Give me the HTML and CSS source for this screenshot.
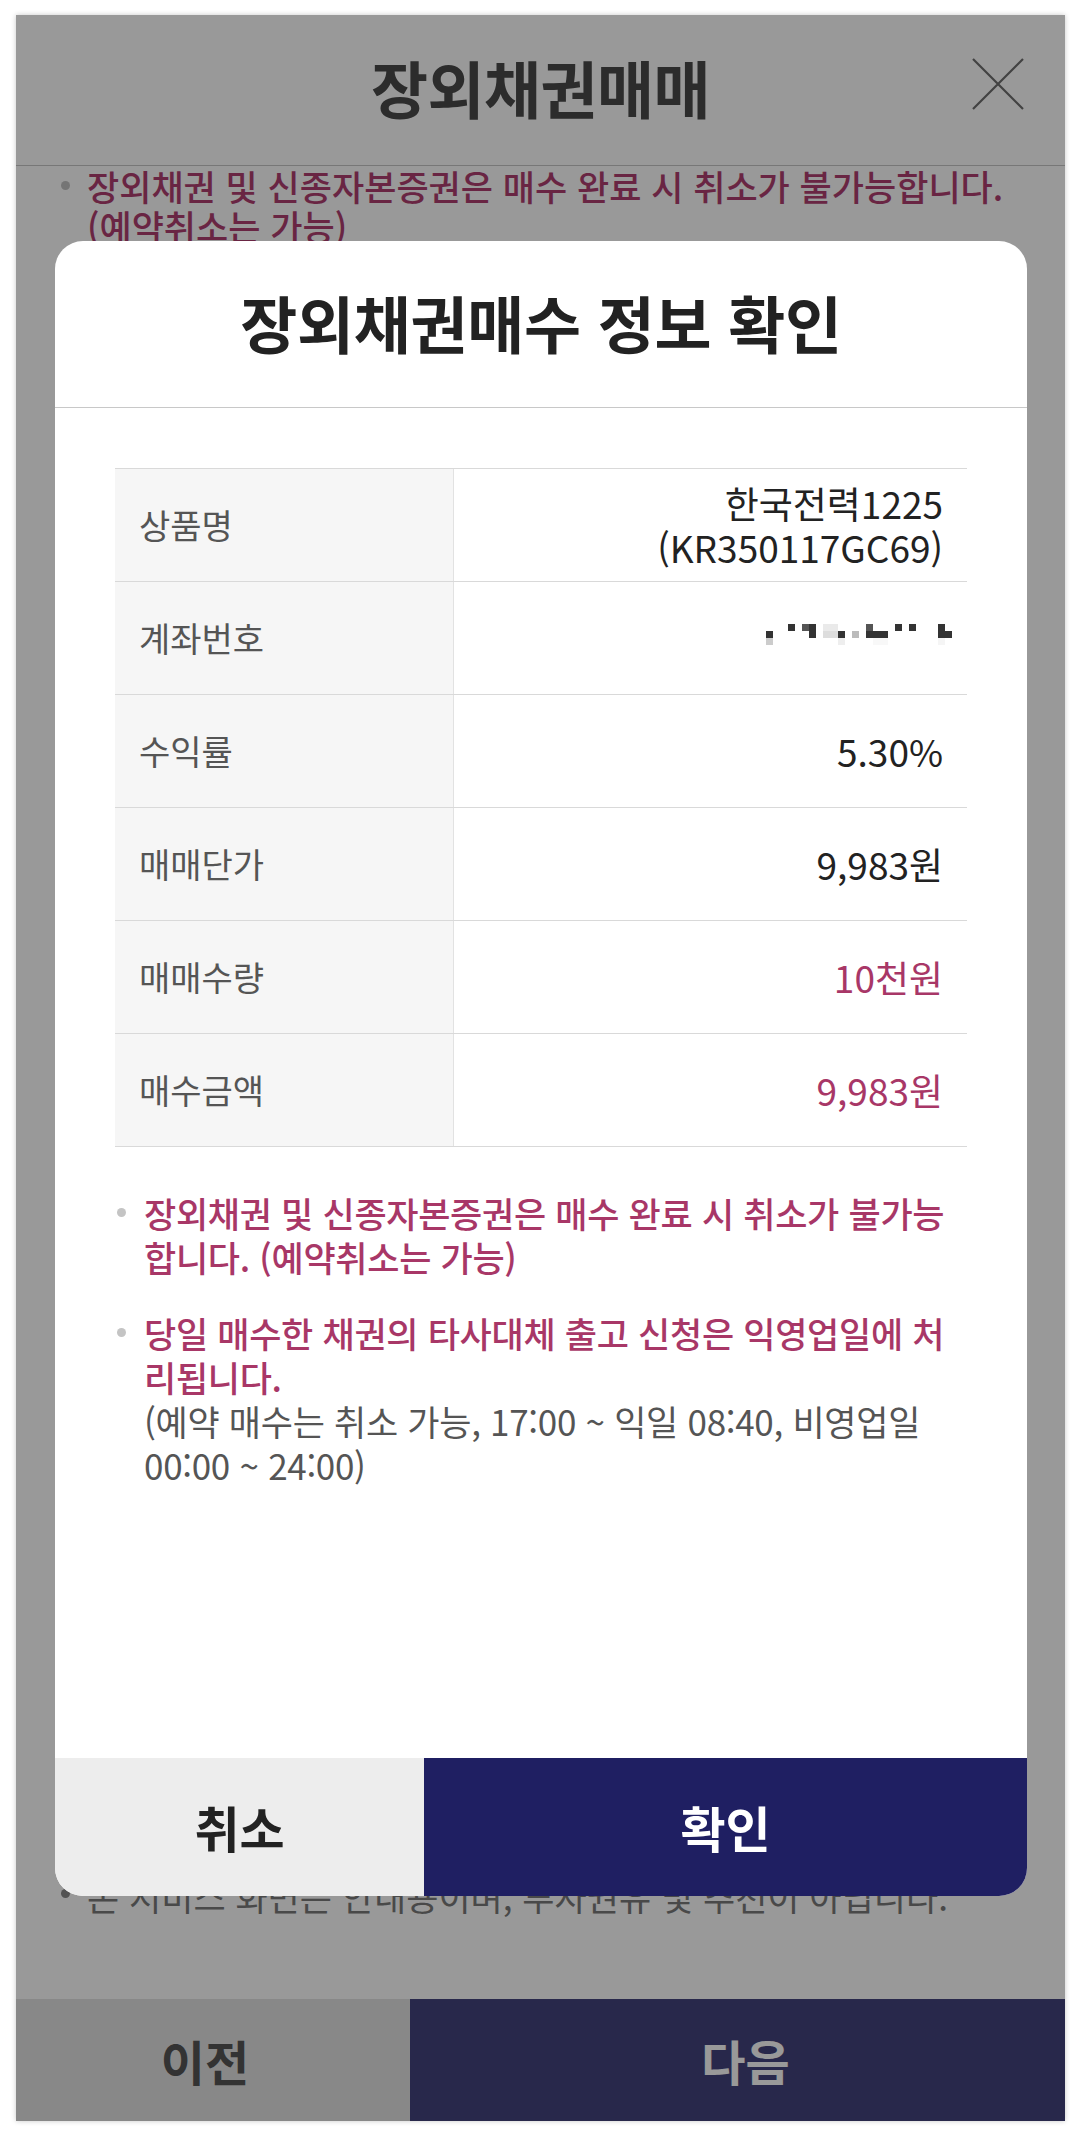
FILE: index.html
```html
<!DOCTYPE html>
<html lang="ko">
<head>
<meta charset="utf-8">
<title>장외채권매매</title>
<link rel="stylesheet" href="styles.css">
</head>
<body>
<div class="screen">
  <header class="app-header">
    <h1 class="app-title">장외채권매매</h1>
    <button class="close-btn" aria-label="닫기">
      <svg width="52" height="52" viewBox="0 0 52 52"><path d="M1 1 L51 51 M51 1 L1 51" stroke="#6e6e6e" stroke-width="2.2" fill="none"/></svg>
    </button>
  </header>
  <main class="page-body">
    <ul class="page-notes">
      <li><span>장외채권 및 신종자본증권은 매수 완료 시 취소가 불가능합니다.<br>(예약취소는 가능)</span></li>
    </ul>
    <ul class="page-notes bottom-notes">
      <li class="plain"><span>본 서비스 화면은 안내용이며, 투자권유 및 추천이 아닙니다.</span></li>
    </ul>
  </main>
  <nav class="bottom-nav">
    <button class="nav-prev">이전</button>
    <button class="nav-next">다음</button>
  </nav>

  <div class="overlay">
    <div class="modal">
      <div class="modal-head">
        <h2 class="modal-title">장외채권매수 정보 확인</h2>
      </div>
      <div class="modal-body">
        <div class="info-table">
          <div class="row">
            <div class="label">상품명</div>
            <div class="value">한국전력1225<br>(KR350117GC69)</div>
          </div>
          <div class="row">
            <div class="label">계좌번호</div>
            <div class="value">
              <svg class="masked" width="190" height="26" viewBox="0 0 190 26">
                <rect x="4" y="10" width="7" height="7" fill="#333"/>
                <rect x="4" y="17" width="7" height="7" fill="#ccc"/>
                <rect x="26" y="3" width="7" height="7" fill="#333"/>
                <rect x="40" y="3" width="7" height="7" fill="#555"/>
                <rect x="47" y="3" width="7" height="14" fill="#333"/>
                <rect x="61" y="3" width="15" height="7" fill="#eaeaea"/>
                <rect x="61" y="10" width="15" height="7" fill="#ddd"/>
                <rect x="76" y="10" width="7" height="7" fill="#333"/>
                <rect x="76" y="17" width="7" height="7" fill="#eee"/>
                <rect x="90" y="10" width="7" height="7" fill="#bbb"/>
                <rect x="104" y="3" width="7" height="7" fill="#555"/>
                <rect x="104" y="10" width="22" height="7" fill="#333"/>
                <rect x="111" y="17" width="15" height="7" fill="#f8f8f8"/>
                <rect x="133" y="3" width="7" height="7" fill="#333"/>
                <rect x="147" y="3" width="7" height="7" fill="#333"/>
                <rect x="176" y="3" width="7" height="14" fill="#333"/>
                <rect x="183" y="10" width="7" height="7" fill="#333"/>
                <rect x="176" y="17" width="7" height="7" fill="#f5f5f5"/>
              </svg>
            </div>
          </div>
          <div class="row">
            <div class="label">수익률</div>
            <div class="value">5.30%</div>
          </div>
          <div class="row">
            <div class="label">매매단가</div>
            <div class="value">9,983원</div>
          </div>
          <div class="row">
            <div class="label">매매수량</div>
            <div class="value accent">10천원</div>
          </div>
          <div class="row">
            <div class="label">매수금액</div>
            <div class="value accent">9,983원</div>
          </div>
        </div>
        <ul class="notes">
          <li><span>장외채권 및 신종자본증권은 매수 완료 시 취소가 불가능<br>합니다. (예약취소는 가능)</span></li>
          <li><span>당일 매수한 채권의 타사대체 출고 신청은 익영업일에 처<br>리됩니다.<br><em class="sub">(예약 매수는 취소 가능, 17:00 ~ 익일 08:40, 비영업일<br>00:00 ~ 24:00)</em></span></li>
        </ul>
      </div>
      <div class="modal-foot">
        <button class="btn-cancel">취소</button>
        <button class="btn-ok">확인</button>
      </div>
    </div>
  </div>
</div>
</body>
</html>
```
FILE: styles.css
```css
* { box-sizing: border-box; }
html, body { margin: 0; padding: 0; background: #fff; }
body {
  font-family: "Noto Sans CJK KR", "Noto Sans", sans-serif;
  padding: 15px 16px;
}
button { font-family: inherit; border: 0; padding: 0; margin: 0; cursor: pointer; }
ul { list-style: none; margin: 0; padding: 0; }

.screen {
  width: 1049px;
  height: 2106px;
  position: relative;
  overflow: hidden;
  background: #fff;
  box-shadow: 0 0 5px rgba(0, 0, 0, 0.22);
  display: flex;
  flex-direction: column;
}

.app-header {
  height: 151px;
  flex: none;
  border-bottom: 1px solid #c6c6c6;
  display: flex;
  align-items: center;
  justify-content: center;
  position: relative;
}
.app-title {
  margin: 0 0 6px;
  font-size: 62px;
  font-weight: 700;
  color: #4a4a4a;
  letter-spacing: -0.5px;
}
.close-btn {
  position: absolute;
  right: 41px;
  top: 43px;
  width: 52px;
  height: 52px;
  background: none;
  display: block;
}
.close-btn svg { display: block; }

.page-body {
  flex: 1;
  display: flex;
  flex-direction: column;
  justify-content: space-between;
  padding: 0 20px 82px 45px;
}
.page-notes li {
  display: flex;
  font-size: 35px;
  line-height: 40px;
  font-weight: 500;
  color: #b03f70;
  white-space: nowrap;
}
.page-notes li::before {
  content: "";
  flex: none;
  width: 9px;
  height: 9px;
  border-radius: 50%;
  background: #c4c4c4;
  margin: 15px 17px 0 0;
}
.page-notes li.plain { color: #7a7a7a; font-weight: 400; line-height: 43px; }
.page-notes li.plain::before { background: #8a8a8a; }

.bottom-nav {
  height: 122px;
  flex: none;
  display: flex;
}
.bottom-nav button {
  font-size: 48px;
  font-weight: 700;
}
.nav-prev {
  width: 394px;
  background: #e3e3e3;
  color: #555;
  padding-right: 16px;
}
.nav-next {
  flex: 1;
  background: #44447d;
  color: #fff;
  padding-left: 16px;
}

.overlay {
  position: absolute;
  inset: 0;
  background: rgba(0, 0, 0, 0.4);
  display: flex;
  align-items: center;
  justify-content: center;
}

.modal {
  width: 972px;
  height: 1655px;
  background: #fff;
  border-radius: 28px;
  overflow: hidden;
  display: flex;
  flex-direction: column;
  margin-left: 1px;
}
.modal-head {
  height: 167px;
  flex: none;
  border-bottom: 1px solid #c8c8c8;
  display: flex;
  align-items: center;
  justify-content: center;
}
.modal-title {
  margin: 0 0 4px;
  font-size: 62px;
  font-weight: 700;
  color: #222;
  letter-spacing: -0.3px;
}

.modal-body {
  flex: 1;
  padding: 60px 60px 0;
}
.info-table {
  border-top: 1px solid #d9d9d9;
}
.row {
  display: grid;
  grid-template-columns: 339px 1fr;
  min-height: 113px;
  border-bottom: 1px solid #d9d9d9;
}
.label {
  background: #f6f6f6;
  border-right: 1px solid #e2e2e2;
  display: flex;
  align-items: center;
  padding: 0 0 0 24px;
  font-size: 34px;
  color: #555;
}
.value {
  display: flex;
  flex-direction: column;
  justify-content: center;
  align-items: flex-end;
  text-align: right;
  padding: 0 24px 0 0;
  font-size: 37px;
  line-height: 44px;
  color: #222;
}
.value.accent { color: #a83767; }
.masked { display: block; margin: -8px -9px 0 0; }

.notes {
  margin-top: 44px;
}
.notes li {
  display: flex;
  font-size: 35px;
  line-height: 44px;
  font-weight: 500;
  color: #a83767;
  margin-bottom: 32px;
  letter-spacing: -0.3px;
  white-space: nowrap;
}
.notes li::before {
  content: "";
  flex: none;
  width: 9px;
  height: 9px;
  border-radius: 50%;
  background: #c4c4c4;
  margin: 17px 18px 0 2px;
}
.notes .sub {
  font-style: normal;
  font-weight: 400;
  color: #555;
}

.modal-foot {
  height: 138px;
  flex: none;
  display: flex;
}
.modal-foot button {
  font-size: 49px;
  font-weight: 700;
}
.btn-cancel {
  width: 369px;
  background: #ededed;
  color: #222;
}
.btn-ok {
  flex: 1;
  background: #1f1f62;
  color: #fff;
}
```
